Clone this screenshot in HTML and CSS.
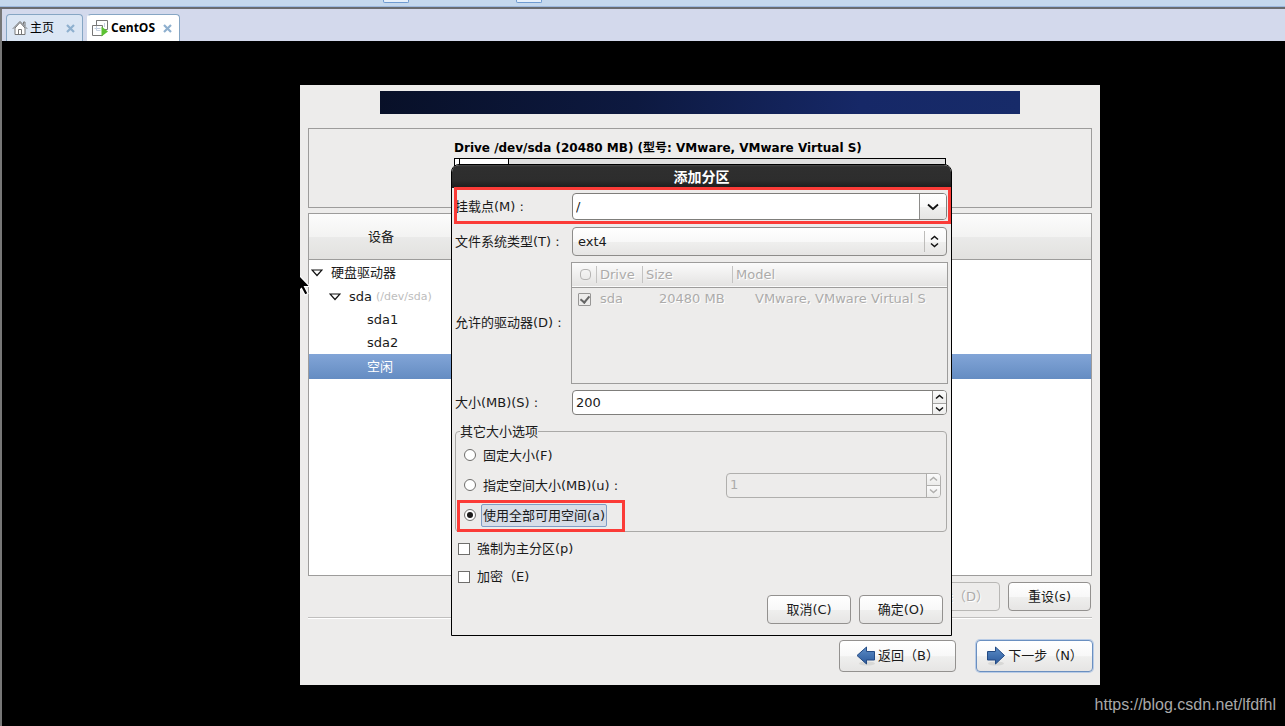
FILE: index.html
```html
<!DOCTYPE html>
<html lang="zh-CN">
<head>
<meta charset="utf-8">
<meta name="viewport" content="width=device-width, initial-scale=1">
<title>CentOS</title>
<link rel="stylesheet" href="styles.css">
</head>
<body>
<div class="toolbar"><span class="tool-edge tool-edge-first"></span><span class="tool-edge"></span></div>
<div class="workspace">
  <nav class="tabs">
    <div class="tab">
      <svg class="tab-icon" width="16" height="16" viewBox="0 0 16 16" fill="none" stroke="#777"><path fill="#fff" d="M3 8v6.500h10V8L8 2.500z"/><path d="M.8 8.800 8 1.400l7.200 7.400M11.500 4.500V2h1.500v4M6.500 14.500V9.500h3v5"/></svg>
      <button class="tab-label" type="button">主页</button>
      <button class="tab-close" type="button" aria-label="关闭主页"><svg width="9" height="9" viewBox="0 0 9 9"><path d="M1 1l7 7M8 1L1 8" stroke="#8fb0cf" stroke-width="2.200"/></svg></button>
    </div>
    <div class="tab tab-active">
      <svg class="tab-icon" width="16" height="17" viewBox="0 0 16 17" fill="none" stroke="#777"><path fill="#fff" d="M4.500 .5h11v9h-11z"/><path fill="#fff" d="M.5 5.500h10v10H.5z"/><path stroke="#777" d="M4.500 5V.5"/><path stroke="#c3cede" d="M4.500 6v4.500h4M2.500 8.500h6M12.500 3v4"/><path fill="#5cc233" stroke="none" d="M9.500 6.500v10l6.500-5z"/></svg>
      <button class="tab-label" type="button">CentOS</button>
      <button class="tab-close" type="button" aria-label="关闭 CentOS"><svg width="9" height="9" viewBox="0 0 9 9"><path d="M1 1l7 7M8 1L1 8" stroke="#8fb0cf" stroke-width="2.200"/></svg></button>
    </div>
  </nav>
  <main class="stage">
    <section class="installer">
      <div class="banner"></div>
      <div class="drive-panel">
        <div class="drive">
          <div class="drive-title">Drive /dev/sda (20480 MB) (型号: VMware, VMware Virtual S)</div>
          <div class="drive-bar"><span class="part part-boot"></span><span class="part part-root"></span></div>
        </div>
      </div>
      <div class="devices">
        <div class="devices-head"><span>设备</span></div>
        <ul class="tree">
          <li class="node node-root"><svg class="twisty" width="12" height="8" viewBox="0 0 12 8"><path d="M1 1h10L6 6.500z" fill="#fff" stroke="#111" stroke-width="1.200"/></svg>硬盘驱动器</li>
          <li class="node node-disk"><svg class="twisty" width="12" height="8" viewBox="0 0 12 8"><path d="M1 1h10L6 6.500z" fill="#fff" stroke="#111" stroke-width="1.200"/></svg>sda <small>(/dev/sda)</small></li>
          <li class="node node-part">sda1</li>
          <li class="node node-part">sda2</li>
          <li class="node node-part node-selected">空闲</li>
        </ul>
      </div>
      <div class="actions">
        <button class="btn" type="button" disabled>删除（D）</button>
        <button class="btn" type="button">重设(s)</button>
      </div>
      <div class="wizard">
        <button class="btn btn-nav" type="button"><svg width="20" height="20" viewBox="0 0 20 20"><defs><linearGradient id="arrow" x1="0" y1="0" x2="0" y2="1"><stop offset="0" stop-color="#5b8cc6"/><stop offset="1" stop-color="#2c5a9c"/></linearGradient></defs><ellipse cx="11" cy="17.500" rx="8" ry="2" fill="#d8d8d6"/><path d="M1 9.500 10.500 1v4.500h8v8.500h-8v4z" fill="url(#arrow)" stroke="#244b84"/></svg>返回（B）</button>
        <button class="btn btn-nav btn-default" type="button"><svg width="20" height="20" viewBox="0 0 20 20"><ellipse cx="10" cy="17.500" rx="8" ry="2" fill="#d8d8d6"/><path d="M18.500 9.500 9.500 1v4.500h-8v8.500h8v4z" fill="url(#arrow)" stroke="#244b84"/></svg>下一步（N）</button>
      </div>
      <svg class="pointer" width="11" height="22" viewBox="0 0 11 22"><path d="M-5-4 10 11.500H4.500L8 18.500 5 20 1.500 13.500-5 19z" fill="#000" stroke="#fff" stroke-width="1.200"/></svg>

      <form class="dialog" role="dialog" aria-labelledby="dialog-title">
        <h1 class="dialog-title" id="dialog-title">添加分区</h1>
        <div class="dialog-body">
          <div class="row row-mount marked">
            <label for="mount">挂载点(M) :</label>
            <div class="field combo">
              <input id="mount" type="text" value="/">
              <button type="button" aria-label="选择挂载点"><svg width="12" height="8" viewBox="0 0 12 8"><path d="M1 1.500 6 6l5-4.500" fill="none" stroke="#111" stroke-width="1.800"/></svg></button>
            </div>
          </div>
          <div class="row">
            <label for="fstype">文件系统类型(T) :</label>
            <div class="dropdown">
              <select id="fstype"><option>ext4</option></select>
              <svg class="dropdown-arrows" width="9" height="13" viewBox="0 0 9 13"><path d="M1 4.500 4.500 1.500 8 4.500M1 8.500l3.500 3L8 8.500" fill="none" stroke="#111" stroke-width="1.500"/></svg>
            </div>
          </div>
          <div class="row">
            <span>允许的驱动器(D) :</span>
            <div class="drives">
              <table>
                <colgroup><col class="col-pick"><col class="col-drive"><col class="col-size"><col></colgroup>
                <thead><tr><th><span class="head-mark"></span></th><th>Drive</th><th>Size</th><th>Model</th></tr></thead>
                <tbody><tr><td><input class="check" type="checkbox" checked disabled aria-label="sda"></td><td>sda</td><td class="size">20480 MB</td><td class="model">VMware, VMware Virtual S</td></tr></tbody>
              </table>
            </div>
          </div>
          <div class="row">
            <label for="size">大小(MB)(S) :</label>
            <div class="field spin">
              <input id="size" type="text" value="200">
              <div class="steps">
                <button type="button" aria-label="增加"><svg width="9" height="6" viewBox="0 0 9 6"><path d="M1 4.500 4.500 1.500 8 4.500"/></svg></button>
                <button type="button" aria-label="减少"><svg width="9" height="6" viewBox="0 0 9 6"><path d="M1 1.500l3.500 3L8 1.500"/></svg></button>
              </div>
            </div>
          </div>
          <fieldset class="options">
            <legend>其它大小选项</legend>
            <div class="option"><input class="radio" id="fixed" type="radio" name="grow"><label for="fixed">固定大小(F)</label></div>
            <div class="option">
              <input class="radio" id="upto" type="radio" name="grow"><label for="upto">指定空间大小(MB)(u) :</label>
              <div class="field spin spin-off">
                <input type="text" value="1" disabled aria-label="指定空间大小">
                <div class="steps">
                  <button type="button" disabled aria-label="增加"><svg width="9" height="6" viewBox="0 0 9 6"><path d="M1 4.500 4.500 1.500 8 4.500"/></svg></button>
                  <button type="button" disabled aria-label="减少"><svg width="9" height="6" viewBox="0 0 9 6"><path d="M1 1.500l3.500 3L8 1.500"/></svg></button>
                </div>
              </div>
            </div>
            <div class="option option-all marked"><input class="radio" id="all" type="radio" name="grow" checked><label class="focused" for="all">使用全部可用空间(a)</label></div>
          </fieldset>
          <div class="checks">
            <div class="check-row"><input class="check" id="primary" type="checkbox"><label for="primary">強制为主分区(p)</label></div>
            <div class="check-row"><input class="check" id="encrypt" type="checkbox"><label for="encrypt">加密（E)</label></div>
          </div>
          <div class="dialog-actions">
            <button class="btn" type="button">取消(C)</button>
            <button class="btn" type="button">确定(O)</button>
          </div>
        </div>
      </form>
    </section>
    <a class="credit" href="https://blog.csdn.net/lfdfhl">https://blog.csdn.net/lfdfhl</a>
  </main>
</div>
</body>
</html>
```

FILE: styles.css
```css
:root {
  --ui: "DejaVu Sans", "Noto Sans CJK SC", sans-serif;
  --surface: #edeceb;
  --line: #9d9c9b;
  --muted: #acabaa;
  --raised: linear-gradient(#fff, #f8f8f8 50%, #efefee 52%, #e6e5e4);
}

* { box-sizing: border-box; }

body {
  display: flex;
  flex-direction: column;
  min-height: 100vh;
  margin: 0;
  background: #000;
  color: #1a1a1a;
  font: 13px/20px var(--ui);
}

button, input, select { font: inherit; color: inherit; }

button { cursor: pointer; }

.toolbar {
  display: flex;
  gap: 107px;
  height: 9px;
  padding-left: 383px;
  background: #c4d8ed;
  border-bottom: 2px solid #696c70;
  box-shadow: inset 0 -1px #9db9de;
}

.tool-edge {
  width: 26px;
  height: 3px;
  background: #e6f0fb;
  border: 1px solid #6f9bd1;
  border-top: 0;
  border-radius: 0 0 2px 2px;
}

.workspace {
  display: flex;
  flex: 1;
  flex-direction: column;
  border-left: 2px solid #777;
}

.tabs {
  display: flex;
  gap: 4px;
  height: 32px;
  padding: 5px 4px 0;
  background: #d3d9ec;
}

.tab {
  display: flex;
  align-items: center;
  padding: 0 7px 0 5px;
  background: #dbe6f4;
  border: 1px solid #86a6c4;
  border-bottom: 0;
  border-radius: 4px 4px 0 0;
}

.tab-active { padding-left: 4px; background: #fff; border-left-color: #fff; }

.tab-label, .tab-close { padding: 0; background: none; border: 0; }

.tab-label { margin: 0 12px 0 2px; color: #000; font-size: 12px; }

.tab-active .tab-label { margin: 0 8px 0 3px; font-family: "Open Sans", "Noto Sans", sans-serif; font-weight: bold; }

.tab-close { display: flex; }

.stage {
  position: relative;
  display: grid;
  flex: 1;
  grid-template-columns: 298fr minmax(0, 800px) 185fr;
  align-items: start;
  padding: 44px 0 41px;
}

.installer {
  position: relative;
  grid-column: 2;
  padding: 6px 8px 13px;
  background: var(--surface);
}

.banner {
  height: 23px;
  margin: 0 72px 14px;
  background: linear-gradient(100deg, #081028, #0d1940 40%, #162867 75%, #172b69);
}

.drive-panel {
  display: flex;
  justify-content: center;
  height: 80px;
  padding-top: 9px;
  border: 1px solid var(--line);
}

.drive { width: 492px; }

.drive-title { color: #000; font-size: 12px; font-weight: bold; }

.drive-bar {
  display: flex;
  height: 36px;
  background: #dfdfdf;
  border: 1px solid #000;
}

.part { background: #fff; border-right: 1px solid #000; }

.part-boot { width: 5px; }

.part-root { width: 49px; }

.devices {
  height: 363px;
  margin-top: 5px;
  background: #fff;
  border: 1px solid var(--line);
}

.devices-head {
  display: grid;
  grid-template-columns: 144px;
  align-items: center;
  height: 46px;
  text-align: center;
  background: linear-gradient(#fcfcfc, #f3f3f2 50%, #eaeae9 52%, #e2e1df);
  border-bottom: 1px solid var(--line);
}

.tree { margin: 0; padding: 0; list-style: none; }

.node { display: flex; align-items: center; height: 23px; }

.node small { margin-left: 4px; color: #bdbdbd; font-size: 11px; }

.twisty { margin-right: 8px; }

.node-root { height: 25px; padding-left: 2px; }

.node-disk { padding-left: 20px; }

.node-part { padding-left: 58px; }

.node-selected {
  height: 25px;
  color: #fff;
  background: linear-gradient(#82a5d7, #648cc2);
}

.btn {
  min-width: 83px;
  height: 29px;
  padding: 0 10px;
  background: var(--raised);
  border: 1px solid #93918f;
  border-radius: 4px;
}

.btn:disabled { color: var(--muted); background: #edeceb; border-color: #b8b7b5; text-shadow: 1px 1px #fff; }

.actions {
  display: flex;
  justify-content: flex-end;
  gap: 8px;
  padding: 6px 1px;
  border-bottom: 1px solid #c0bfbe;
  box-shadow: 0 1px #fff;
}

.wizard {
  display: flex;
  justify-content: flex-end;
  gap: 20px;
  margin: 22px -1px 0 0;
}

.btn-nav {
  display: flex;
  align-items: center;
  justify-content: center;
  gap: 2px;
  width: 117px;
  height: 32px;
  padding: 0;
  white-space: nowrap;
}

.btn-default { border-color: #6a8fc0; box-shadow: 0 0 0 1px #b9cce6; }

.pointer { position: absolute; top: 190px; left: 0; }

.dialog {
  position: absolute;
  top: 79px;
  left: 151px;
  width: 501px;
  background: var(--surface);
  border: 1px solid #000;
  border-radius: 8px 8px 0 0;
}

.dialog-title {
  height: 23px;
  margin: 0;
  color: #fff;
  font-size: 14px;
  line-height: 24px;
  text-align: center;
  background: linear-gradient(#4a4a4a, #2f2f2f 8%, #2d2d2d 65%, #1c1c1c);
  border-radius: 7px 7px 0 0;
}

.dialog-body { padding: 5px 4px 11px 3px; }

.row {
  display: grid;
  grid-template-columns: 117px 1fr;
  align-items: center;
  margin-bottom: 6px;
}

.marked { position: relative; }

.marked::after {
  content: "";
  position: absolute;
  inset: -6px -4px -4px -1px;
  border: 3px solid #fb3b37;
  pointer-events: none;
}

.row-mount { margin-bottom: 7px; }

.field {
  display: flex;
  height: 25px;
  overflow: hidden;
  background: #fff;
  border: 1px solid #7f7e7b;
  border-radius: 4px;
}

.field input {
  flex: 1;
  min-width: 0;
  padding: 0 3px;
  background: none;
  border: 0;
  outline: 0;
}

.combo { height: 27px; }

.combo button {
  width: 27px;
  padding: 0;
  background: var(--raised);
  border: 0;
  border-left: 1px solid #8d8c8a;
}

.dropdown { position: relative; }

.dropdown select {
  display: block;
  width: 100%;
  height: 29px;
  padding: 0 5px;
  appearance: none;
  background: var(--raised);
  border: 1px solid #8d8c8a;
  border-radius: 4px;
}

.dropdown::after {
  content: "";
  position: absolute;
  top: 4px;
  right: 22px;
  bottom: 4px;
  border-left: 1px solid #bdbcba;
}

.dropdown-arrows { position: absolute; top: 8px; right: 8px; }

.drives {
  height: 122px;
  margin: 0 -1px;
  border: 1px solid var(--line);
}

.drives table {
  width: 100%;
  table-layout: fixed;
  border-collapse: collapse;
  color: var(--muted);
  text-shadow: 1px 1px #fff;
}

.drives th, .drives td { height: 24px; padding: 0 4px; font-weight: normal; text-align: left; white-space: nowrap; }

.drives thead { background: linear-gradient(#fbfbfb, #e4e3e2); border-bottom: 1px solid var(--line); }

.drives th + th { background: linear-gradient(#c4c3c2, #c4c3c2) 0 50% / 1px 17px no-repeat; }

.drives th:first-child, .drives td:first-child { padding-left: 6px; }

.drives .size { padding-left: 17px; }

.drives .model { padding-left: 23px; }

.col-pick { width: 24px; }

.col-drive { width: 46px; }

.col-size { width: 90px; }

.head-mark { display: block; width: 11px; height: 11px; margin-left: 2px; border: 1px solid #b5b4b3; border-radius: 4px; }

.steps {
  display: grid;
  grid-template-rows: 1fr 1fr;
  width: 14px;
  border-left: 1px solid #8d8c8a;
}

.steps button {
  display: flex;
  align-items: center;
  justify-content: center;
  min-height: 0;
  padding: 0;
  background: linear-gradient(#fbfbfb, #ececeb);
  border: 0;
}

.steps button + button { border-top: 1px solid #a5a4a2; }

.steps path { fill: none; stroke: #111; stroke-width: 1.5px; }

.options {
  min-width: 0;
  margin: 8px 0 0;
  padding: 0 5px 1px 8px;
  border: 1px solid #aaa9a7;
  border-radius: 4px;
}

.options legend { margin-left: -4px; padding: 0; line-height: 17px; }

.option { display: flex; align-items: center; height: 30px; }

.option label { padding: 2px 1px 0; }

.spin-off {
  width: 215px;
  margin-left: auto;
  color: var(--muted);
  background: var(--surface);
  border-color: #b0afad;
}

.spin-off .steps, .spin-off .steps button { border-color: #b0afad; }

.spin-off path { stroke: #b0afad; }

.option-all { width: 160px; }

.option-all::after { inset: 0 -1px -2px -7px; }

.option .focused {
  padding: 1px 1px 0;
  margin-left: -1px;
  background: #d7dde7;
  border: 1px solid #7f9cc4;
  border-radius: 2px;
  white-space: nowrap;
}

.radio, .check {
  display: grid;
  flex: none;
  width: 12px;
  height: 12px;
  margin: 0 6px 0 0;
  place-items: center;
  appearance: none;
  background: #fff;
  border: 1px solid #6f6e6c;
}

.radio { border-radius: 50%; }

.radio:checked::before {
  content: "";
  width: 6px;
  height: 6px;
  background: #1a1a1a;
  border-radius: 50%;
}

.drives .check { width: 13px; height: 13px; background: var(--surface); border-color: #989796; border-radius: 1px; }

.check:checked::before {
  content: "";
  width: 4px;
  height: 7px;
  margin-bottom: 2px;
  border: solid #666;
  border-width: 0 2px 2px 0;
  rotate: 40deg;
}

.checks { padding: 3px 0 0 3px; }

.check-row { display: flex; align-items: center; gap: 1px; height: 28px; }

.dialog-actions {
  display: flex;
  justify-content: flex-end;
  gap: 8px;
  padding: 4px 4px 0 0;
}

.dialog-actions .btn { min-width: 84px; }

.credit {
  position: absolute;
  right: 9px;
  bottom: 10px;
  color: #a9a9a9;
  font: 16px/22px "Liberation Sans", Arial, sans-serif;
  text-decoration: none;
}
```
